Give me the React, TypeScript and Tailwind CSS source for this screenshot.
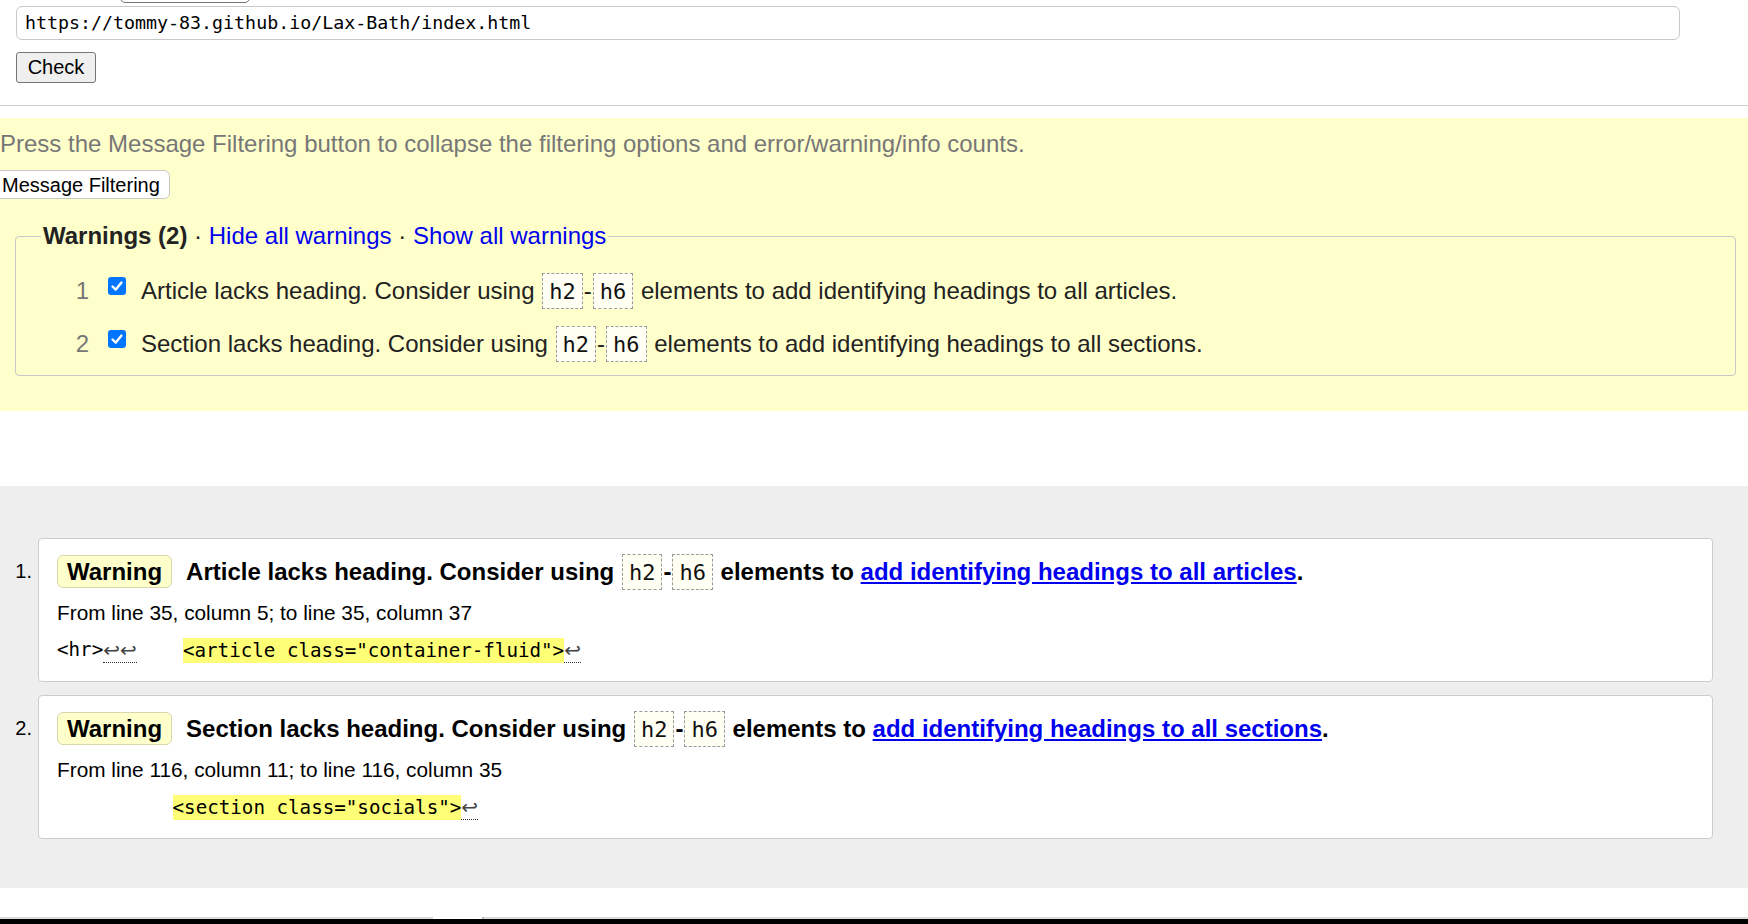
import React from "react";

function Code({ children }: { children: React.ReactNode }) {
  return (
    <code className="inline-block h-[36px] pt-[2px] leading-[32px] px-[6px] mx-[1px] border border-dashed border-[#9a9a9a] bg-[#fffff4] font-['DejaVu_Sans_Mono',monospace] text-[22px] font-normal text-[#111]">
      {children}
    </code>
  );
}

function Check() {
  return (
    <span className="ml-[19px] -mt-[10px] w-[18px] h-[18px] rounded-[3px] bg-[#0075ff] flex items-center justify-center shrink-0">
      <svg width="14" height="14" viewBox="0 0 14 14">
        <polyline points="2.5,7.5 5.8,10.6 11.5,3.6" fill="none" stroke="#ffffff" strokeWidth="2.4" strokeLinecap="round" strokeLinejoin="round" />
      </svg>
    </span>
  );
}

function FilterRow({ n, text, tail }: { n: string; text: string; tail: string }) {
  return (
    <div className="flex items-center h-[36px]">
      <span className="w-[50px] text-right text-[#777] text-[24px] leading-[28px]">{n}</span>
      <Check />
      <span className="ml-[15px] text-[24px] text-[#222] whitespace-nowrap">
        {text} <Code>h2</Code>-<Code>h6</Code> {tail}
      </span>
    </div>
  );
}

function Lf({ children }: { children: React.ReactNode }) {
  return (
    <span className="inline-block h-[25px] leading-[25px] border-b border-dotted border-[#333] font-['DejaVu_Sans',sans-serif] text-[20px] text-[#444]">
      {children}
    </span>
  );
}

function Card({
  n,
  title,
  link,
  from,
  extract,
}: {
  n: string;
  title: string;
  link: string;
  from: string;
  extract: React.ReactNode;
}) {
  return (
    <div className="flex">
      <div className="w-[38px] pr-[6px] pt-[17px] text-right text-[20px] leading-[33px] text-black">{n}</div>
      <div className="w-[1675px] bg-white border border-[#cccccc] rounded-[4px] pl-[18px] pt-[16px] pb-[18px]">
        <div className="flex items-center h-[33px]">
          <span className="h-[33px] px-[9px] flex items-center bg-[#ffffcc] border border-[#d9d6ad] rounded-[6px] text-[24px] font-bold text-black">
            Warning
          </span>
          <span className="ml-[14px] text-[24px] font-bold text-black whitespace-nowrap">
            {title} <Code>h2</Code>-<Code>h6</Code> elements to{" "}
            <a className="text-[#0000ee] underline underline-offset-[2px]">{link}</a>.
          </span>
        </div>
        <div className="mt-[13px] text-[20.8px] leading-[24px] text-black">{from}</div>
        <div className="mt-[13px] h-[25px] flex items-center font-['DejaVu_Sans_Mono',monospace] text-[19.2px] text-black whitespace-pre">
          {extract}
        </div>
      </div>
    </div>
  );
}

export default function App() {
  return (
    <div className="w-[1748px] h-[924px] overflow-hidden bg-white flex flex-col font-['Liberation_Sans',Arial,sans-serif] text-black">
      {/* partial top row */}
      <div className="h-[6px] overflow-hidden flex items-end pl-[120px] shrink-0">
        <span className="mb-[3px] w-[130px] h-[30px] border border-[#767676] rounded-[5px] bg-white"></span>
      </div>

      {/* address input */}
      <div className="ml-[16px] w-[1664px] h-[34px] shrink-0 border border-[#c8c8c8] rounded-[6px] flex items-center pl-[8px] font-['DejaVu_Sans_Mono',monospace] text-[18.3px] text-black">
        https://tommy-83.github.io/Lax-Bath/index.html
      </div>

      <button className="mt-[12px] ml-[16px] w-[80px] h-[31px] shrink-0 self-start border border-[#767676] rounded-[3px] bg-[#efefef] text-[20px] leading-none text-black pb-[1px]">
        Check
      </button>

      <div className="mt-[22px] h-px bg-[#cfcfcf] shrink-0"></div>

      {/* yellow filtering block */}
      <div className="mt-[12px] h-[293px] shrink-0 bg-[#ffffcc] flex flex-col">
        <p className="mt-[12px] text-[24px] leading-[28px] text-[#777]">
          Press the Message Filtering button to collapse the filtering options and error/warning/info counts.
        </p>
        <button className="mt-[12px] -ml-[9px] self-start h-[29px] pl-[10px] pr-[9px] bg-white border border-[#c8c8c8] rounded-[6px] text-[20px] leading-none text-black">
          Message Filtering
        </button>
        <fieldset className="mt-[23px] ml-[15px] mr-[12px] border border-[#c8c8c8] rounded-[4px] pl-[25px] pr-[10px] pb-[13px]">
          <legend className="px-[2px] text-[24px] leading-[28px] text-[#222]">
            <strong>Warnings (2)</strong> · <a className="text-[#0000ee]">Hide all warnings</a> ·{" "}
            <a className="text-[#0000ee]">Show all warnings</a>
          </legend>
          <div className="pt-[23px] -ml-[2px] flex flex-col gap-[17px]">
            <FilterRow
              n="1"
              text="Article lacks heading. Consider using"
              tail="elements to add identifying headings to all articles."
            />
            <FilterRow
              n="2"
              text="Section lacks heading. Consider using"
              tail="elements to add identifying headings to all sections."
            />
          </div>
        </fieldset>
      </div>

      {/* results */}
      <div className="mt-[75px] shrink-0 bg-[#eeeeee] pt-[52px] pb-[49px] flex flex-col gap-[13px]">
        <Card
          n="1."
          title="Article lacks heading. Consider using"
          link="add identifying headings to all articles"
          from="From line 35, column 5; to line 35, column 37"
          extract={
            <>
              <span>{"<hr>"}</span>
              <Lf>↩↩</Lf>
              <span>{"    "}</span>
              <span className="inline-block h-[25px] leading-[25px] bg-[#ffff77]">{'<article class="container-fluid">'}</span>
              <Lf>↩</Lf>
            </>
          }
        />
        <Card
          n="2."
          title="Section lacks heading. Consider using"
          link="add identifying headings to all sections"
          from="From line 116, column 11; to line 116, column 35"
          extract={
            <>
              <span>{"          "}</span>
              <span className="inline-block h-[25px] leading-[25px] bg-[#ffff77]">{'<section class="socials">'}</span>
              <Lf>↩</Lf>
            </>
          }
        />
      </div>

      <div className="mt-[29px] h-[2px] shrink-0 flex">
        <div className="w-[433px] bg-[#dcdcdc]"></div>
        <div className="w-[49px] bg-white"></div>
        <div className="w-[2px] bg-[#bbbbbb]"></div>
        <div className="flex-1 bg-[#dcdcdc]"></div>
      </div>
      <div className="flex-1 bg-black"></div>
    </div>
  );
}
